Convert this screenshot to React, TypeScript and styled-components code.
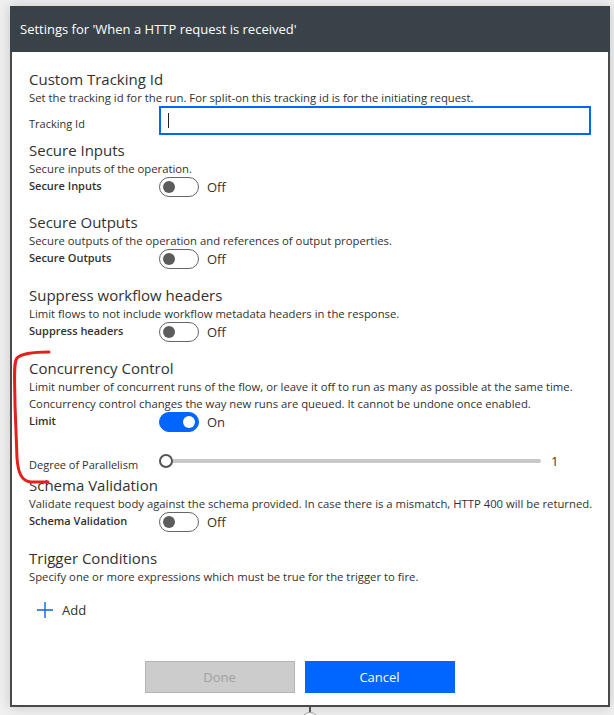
import React, { useState } from 'react';
import styled, { createGlobalStyle } from 'styled-components';

const GlobalStyle = createGlobalStyle`
  html, body {
    margin: 0;
    padding: 0;
    background: #f0f0f0;
    font-family: "Open Sans", "Noto Sans", sans-serif;
    color: #323130;
  }
`;

const Page = styled.div`
  position: relative;
  width: 614px;
  height: 715px;
  overflow: hidden;
  padding: 6px 0 0 10px;
  box-sizing: border-box;
`;

const Dialog = styled.div`
  width: 600px;
  background: #fff;
  box-shadow: 0 0 12px rgba(0, 0, 0, 0.18);
`;

const Header = styled.div`
  height: 46px;
  background: #3a4249;
  color: #fff;
  display: flex;
  align-items: center;
  padding-left: 10px;
  font-size: 13px;
`;

const Body = styled.div`
  border: 2px solid #4a4a4a;
  border-top: none;
  padding: 17px 0 12px 17px;
`;

const Section = styled.div<{ gap?: number }>`
  margin-top: ${p => p.gap ?? 15}px;
  &:first-child {
    margin-top: 0;
  }
`;

const Title = styled.div`
  font-size: 15px;
  line-height: 20px;
  height: 20px;
`;

const Desc = styled.div`
  font-size: 11.3px;
  line-height: 17px;
  height: 17px;
  white-space: nowrap;
`;

const Row = styled.div<{ top?: number }>`
  display: flex;
  align-items: flex-start;
  margin-top: ${p => p.top ?? 0}px;
`;

const Label = styled.div<{ bold?: boolean; pad?: number }>`
  width: 130px;
  flex-shrink: 0;
  font-size: 11px;
  line-height: 17px;
  padding-top: ${p => p.pad ?? 0}px;
  font-weight: ${p => (p.bold ? 600 : 400)};
`;

const TextInput = styled.div`
  width: 432px;
  height: 29px;
  box-sizing: border-box;
  border: 2px solid #0066ff;
  display: flex;
  align-items: center;
  padding-left: 7px;
`;

const Caret = styled.span`
  width: 1px;
  height: 15px;
  background: #222;
`;

const Toggle = styled.div<{ on: boolean }>`
  width: 40px;
  height: 20px;
  box-sizing: border-box;
  border-radius: 10px;
  border: 1px solid ${p => (p.on ? '#0066ff' : '#666')};
  background: ${p => (p.on ? '#0066ff' : '#fff')};
  display: flex;
  align-items: center;
  justify-content: ${p => (p.on ? 'flex-end' : 'flex-start')};
  padding: 0 3px;
  cursor: pointer;
`;

const Knob = styled.span<{ on: boolean }>`
  width: 12px;
  height: 12px;
  border-radius: 50%;
  background: ${p => (p.on ? '#fff' : '#5c5c5c')};
`;

const ToggleText = styled.span`
  font-size: 13px;
  line-height: 20px;
  margin-left: 8px;
`;

const SliderBox = styled.div`
  display: flex;
  align-items: center;
  height: 24px;
  margin-top: 2px;
`;

const Track = styled.div`
  position: relative;
  width: 382px;
  height: 4px;
  border-radius: 2px;
  background: #c8c8c8;
`;

const Thumb = styled.span`
  position: absolute;
  left: 0;
  top: -5px;
  width: 14px;
  height: 14px;
  box-sizing: border-box;
  border-radius: 50%;
  border: 2px solid #555;
  background: #fff;
`;

const SliderValue = styled.span`
  font-size: 13px;
  margin-left: 10px;
`;

const AddButton = styled.div`
  display: flex;
  align-items: center;
  gap: 9px;
  margin: 13px 0 0 8px;
  font-size: 13px;
  height: 24px;
`;

const Footer = styled.div`
  display: flex;
  justify-content: center;
  gap: 10px;
  margin-top: 39px;
  padding-right: 38px;
`;

const Button = styled.button<{ primary?: boolean }>`
  width: 150px;
  height: 32px;
  font-family: inherit;
  font-size: 13px;
  border: 1px solid ${p => (p.primary ? '#0066ff' : '#b3b3b3')};
  background: ${p => (p.primary ? '#0066ff' : '#cccccc')};
  color: ${p => (p.primary ? '#fff' : '#a0a0a0')};
`;

const Connector = styled.div`
  display: flex;
  flex-direction: column;
  align-items: center;
  width: 600px;
`;

const Stem = styled.span`
  width: 2px;
  height: 5px;
  background: #555;
`;

const Dot = styled.span`
  width: 16px;
  height: 16px;
  border-radius: 50%;
  border: 1px solid #999;
  background: #fff;
`;

const Scribble = styled.svg`
  position: absolute;
  left: 0;
  top: 0;
  pointer-events: none;
`;

const Switch = ({ initial, label }: { initial: boolean; label: string }) => {
  const [on, setOn] = useState(initial);
  return (
    <Row>
      <Label bold>{label}</Label>
      <Toggle on={on} onClick={() => setOn(!on)}>
        <Knob on={on} />
      </Toggle>
      <ToggleText>{on ? 'On' : 'Off'}</ToggleText>
    </Row>
  );
};

export default function App() {
  return (
    <Page>
      <GlobalStyle />
      <Dialog>
        <Header>Settings for 'When a HTTP request is received'</Header>
        <Body>
          <Section>
            <Title>Custom Tracking Id</Title>
            <Desc>Set the tracking id for the run. For split-on this tracking id is for the initiating request.</Desc>
            <Row>
              <Label pad={9}>Tracking Id</Label>
              <TextInput>
                <Caret />
              </TextInput>
            </Row>
          </Section>
          <Section gap={5}>
            <Title>Secure Inputs</Title>
            <Desc>Secure inputs of the operation.</Desc>
            <Switch initial={false} label="Secure Inputs" />
          </Section>
          <Section>
            <Title>Secure Outputs</Title>
            <Desc>Secure outputs of the operation and references of output properties.</Desc>
            <Switch initial={false} label="Secure Outputs" />
          </Section>
          <Section gap={16}>
            <Title>Suppress workflow headers</Title>
            <Desc>Limit flows to not include workflow metadata headers in the response.</Desc>
            <Switch initial={false} label="Suppress headers" />
          </Section>
          <Section gap={16}>
            <Title>Concurrency Control</Title>
            <Desc>Limit number of concurrent runs of the flow, or leave it off to run as many as possible at the same time.</Desc>
            <Desc>Concurrency control changes the way new runs are queued. It cannot be undone once enabled.</Desc>
            <Switch initial={true} label="Limit" />
            <Row top={15}>
              <Label pad={9}>Degree of Parallelism</Label>
              <SliderBox>
                <Track>
                  <Thumb />
                </Track>
                <SliderValue>1</SliderValue>
              </SliderBox>
            </Row>
          </Section>
          <Section gap={2}>
            <Title>Schema Validation</Title>
            <Desc>Validate request body against the schema provided. In case there is a mismatch, HTTP 400 will be returned.</Desc>
            <Switch initial={false} label="Schema Validation" />
          </Section>
          <Section gap={16}>
            <Title>Trigger Conditions</Title>
            <Desc>Specify one or more expressions which must be true for the trigger to fire.</Desc>
            <AddButton>
              <svg width="16" height="16" viewBox="0 0 16 16">
                <path d="M8 0v16M0 8h16" stroke="#0a66e4" strokeWidth="1.4" />
              </svg>
              Add
            </AddButton>
          </Section>
          <Footer>
            <Button disabled>Done</Button>
            <Button primary>Cancel</Button>
          </Footer>
        </Body>
      </Dialog>
      <Connector>
        <Stem />
        <Dot />
      </Connector>
      <Scribble width="614" height="715">
        <path
          d="M49 352 C36 352 22 353 17 358 C13 363 15 385 15 405 L17 458 C18 472 21 481 31 482 L48 482"
          fill="none"
          stroke="#e3201b"
          strokeWidth="3"
          strokeLinecap="round"
        />
      </Scribble>
    </Page>
  );
}
